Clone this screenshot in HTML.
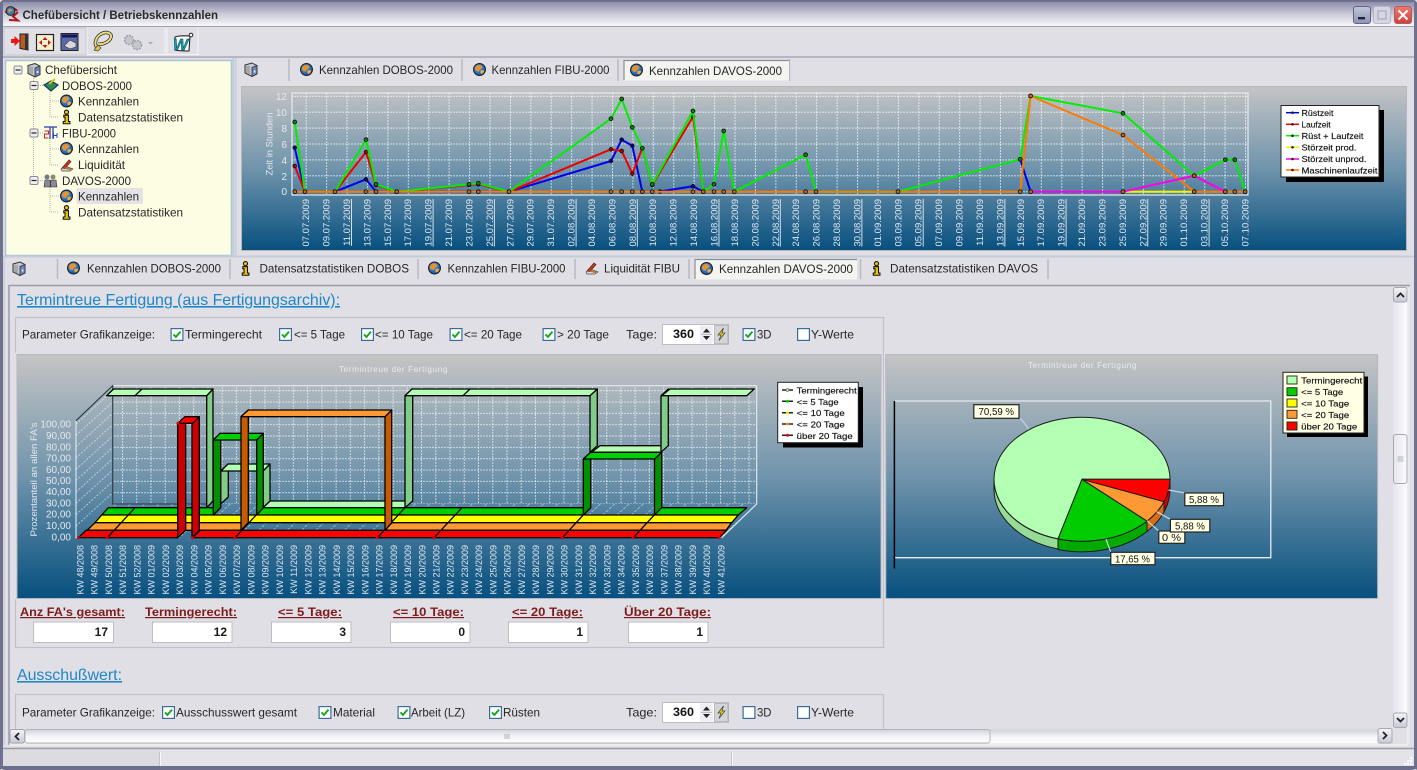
<!DOCTYPE html>
<html lang="de"><head><meta charset="utf-8"><title>Chefübersicht / Betriebskennzahlen</title>
<style>
html,body{margin:0;padding:0;background:#e0dfe5;width:1417px;height:770px;overflow:hidden}
svg{display:block;position:absolute;left:0;top:0;filter:blur(.35px)}
text{font-family:"Liberation Sans",sans-serif;font-size:11.7px;fill:#262626;white-space:pre}
.tt{font-weight:bold;font-size:11.5px;fill:#2a2a2a}
.sec{font-size:16px;fill:#1e87c8;text-decoration:underline}
.st{font-weight:bold;font-size:12px;fill:#7e1c1c;text-decoration:underline}
.v{font-weight:bold;font-size:12px;fill:#1a1a1a;text-anchor:end}
.d text{font-size:9.5px;fill:#dfe6ee;text-anchor:end}
.d text.u{text-decoration:underline}
.k text{font-size:9px;fill:#dfe6ee;text-anchor:end}
.yt text{font-size:10px;fill:#e4e8ec;text-anchor:end}
.wt{font-size:8px;fill:#e8ecef;letter-spacing:.6px}
.lg text{font-size:8.5px;fill:#111;stroke:#111;stroke-width:.15}
.pl{font-size:10px;fill:#111}
.s{stroke:#000;stroke-width:1.3;stroke-linejoin:round}
.l{fill:none;stroke-width:2;stroke-linejoin:round}
.sep{stroke:#b9b9c2;stroke-width:1.5}
</style></head><body>
<svg width="1417" height="770" viewBox="0 0 1417 770" xmlns="http://www.w3.org/2000/svg">
<defs>
<linearGradient id="cg" x1="0" y1="0" x2="0" y2="1"><stop offset="0" stop-color="#c4c4c4"/><stop offset=".5" stop-color="#7094ac"/><stop offset="1" stop-color="#07507f"/></linearGradient>
<linearGradient id="tb" x1="0" y1="0" x2="0" y2="1"><stop offset="0" stop-color="#8d8ea9"/><stop offset=".55" stop-color="#cfcfdc"/><stop offset="1" stop-color="#f7f7fa"/></linearGradient>
<linearGradient id="bt" x1="0" y1="0" x2="0" y2="1"><stop offset="0" stop-color="#f4f4f8"/><stop offset="1" stop-color="#c8c9d6"/></linearGradient>
<linearGradient id="hb" x1="0" y1="0" x2="0" y2="1"><stop offset="0" stop-color="#cfd0da"/><stop offset=".5" stop-color="#f4f4f8"/><stop offset="1" stop-color="#fdfdff"/></linearGradient>
<linearGradient id="vb" x1="0" y1="0" x2="1" y2="0"><stop offset="0" stop-color="#e4e4ec"/><stop offset="1" stop-color="#fbfbff"/></linearGradient>
<linearGradient id="mn" x1="0" y1="0" x2="0" y2="1"><stop offset="0" stop-color="#c3c6dc"/><stop offset="1" stop-color="#8f93b3"/></linearGradient>
<linearGradient id="cl" x1="0" y1="0" x2="0" y2="1"><stop offset="0" stop-color="#ee7b70"/><stop offset="1" stop-color="#cf3f3a"/></linearGradient>
<radialGradient id="gl" cx=".4" cy=".35" r=".7"><stop offset="0" stop-color="#4fa8f5"/><stop offset="1" stop-color="#0f4aa6"/></radialGradient>
<pattern id="pv" patternUnits="userSpaceOnUse" x="305.7" y="0" width="20.42" height="3"><rect x="0" y="0" width="1" height="2" fill="#fff" opacity=".65"/></pattern>
<pattern id="ph" patternUnits="userSpaceOnUse" x="0" y="191.2" width="3" height="15.9"><rect x="0" y="0" width="2" height="1" fill="#fff" opacity=".65"/></pattern>
<pattern id="pv2" patternUnits="userSpaceOnUse" x="122" y="0" width="14.24" height="3"><rect x="0" y="0" width="1" height="2" fill="#fff" opacity=".6"/></pattern>
<pattern id="ph2" patternUnits="userSpaceOnUse" x="0" y="390.2" width="3" height="11.33"><rect x="0" y="0" width="2" height="1" fill="#fff" opacity=".6"/></pattern>
<pattern id="pf" patternUnits="userSpaceOnUse" x="80" y="504" width="14.24" height="3" patternTransform="skewX(-47.4)"><rect x="0" y="0" width="1" height="2" fill="#fff" opacity=".6"/></pattern>
<marker id="mg" markerWidth="6" markerHeight="6" refX="3" refY="3" markerUnits="userSpaceOnUse"><circle cx="3" cy="3" r="1.9" fill="#0c8a0c" stroke="#111" stroke-width=".9"/></marker>
<marker id="mo" markerWidth="6" markerHeight="6" refX="3" refY="3" markerUnits="userSpaceOnUse"><circle cx="3" cy="3" r="1.9" fill="#c86a10" stroke="#111" stroke-width=".9"/></marker>
<marker id="mr" markerWidth="6" markerHeight="6" refX="3" refY="3" markerUnits="userSpaceOnUse"><circle cx="3" cy="3" r="1.8" fill="#b00" stroke="#111" stroke-width=".9"/></marker>
<marker id="mb" markerWidth="6" markerHeight="6" refX="3" refY="3" markerUnits="userSpaceOnUse"><circle cx="3" cy="3" r="1.8" fill="#00a" stroke="#111" stroke-width=".9"/></marker>
<symbol id="globe" viewBox="0 0 14 14" overflow="visible"><circle cx="7" cy="7" r="6.4" fill="url(#gl)" stroke="#1c1c1c" stroke-width="1.1"/><path d="M3 3.6C5 1.500 9.500 1.600 10 4.400 10.300 6.400 7.500 6 7 7.800 6.500 9.500 4.300 9.700 2.900 8 1.900 6.600 1.900 4.800 3 3.600Z" fill="#e8922a"/><path d="M8.400 8.100c1.600-.7 3.600-.6 3.600.5 0 1.800-2 3.300-3.200 2.900-1-.4-1.300-2.700-.4-3.400Z" fill="#eead3a"/></symbol>
<symbol id="info" viewBox="0 0 10 16" overflow="visible"><circle cx="5" cy="2.600" r="2.300" fill="#f0c800" stroke="#111" stroke-width="1.200"/><path d="M2 6h5.200v7h1.600v2.500H1.400V13h2V8.200H2Z" fill="#f0c800" stroke="#111" stroke-width="1.200"/></symbol>
<symbol id="box" viewBox="0 0 14 15" overflow="visible"><path d="M1 3 8 1l5 2.500V12l-5 2.500L1 11Z" fill="#c6c9d2" stroke="#333" stroke-width="1"/><path d="M8 5.500 13 3.500V12l-5 2.500Z" fill="#6f86b8" stroke="#333" stroke-width=".8"/><path d="M3 4v7M5 4v8" stroke="#777" stroke-width=".8"/><path d="M9.800 8.500h1.600v2H9.800Z" fill="#eef"/></symbol>
<symbol id="liq" viewBox="0 0 14 14" overflow="visible"><path d="M1 11 5 8l8 3-3 2H2Z" fill="#d8d8e0" stroke="#444" stroke-width=".7"/><path d="M2 10 9 2l2 1.500-6 7Z" fill="#c83a1a" stroke="#522" stroke-width=".7"/><path d="M5 10l6 1.500" stroke="#c87018" stroke-width="1.600"/></symbol>
<symbol id="cb" viewBox="0 0 13 13" overflow="visible"><rect x=".6" y=".6" width="11.800" height="11.800" fill="#fff" stroke="#3a6d94" stroke-width="1.200"/><path d="M3 6.400 5.400 9 10 3.600" fill="none" stroke="#0fa81a" stroke-width="1.900"/></symbol>
<symbol id="cn" viewBox="0 0 13 13" overflow="visible"><rect x=".6" y=".6" width="11.800" height="11.800" fill="#fff" stroke="#3a6d94" stroke-width="1.200"/></symbol>
<symbol id="ex" viewBox="0 0 9 9" overflow="visible"><rect x=".5" y=".5" width="8" height="8" rx="1.500" fill="#eeeef2" stroke="#8a8a96"/><path d="M2 4.500h5" stroke="#222" stroke-width="1.200"/></symbol>
<symbol id="spin" viewBox="0 0 67 20" overflow="visible"><rect x=".5" y=".5" width="66" height="20" fill="#fff" stroke="#bcbcc4"/><rect x="38" y="1.500" width="13" height="18" fill="#eeeef4"/><path d="M41 8.500l3.500-4 3.500 4ZM41 12l3.500 4 3.500-4Z" fill="#222"/><path d="M39 10.300h11" stroke="#aaa" stroke-width=".8"/><rect x="52.500" y="1.500" width="13.500" height="18" fill="#d4d4d8" stroke="#999" stroke-width=".6"/><path d="M61.500 4 56 11h3l-2 5.500 6-7.500h-3l1.500-5Z" fill="#e9c616" stroke="#444" stroke-width=".7"/></symbol>
</defs>

<!-- window frame -->
<rect x="0" y="0" width="1417" height="770" rx="5" fill="#70728f"/>
<rect x="3" y="2" width="1411" height="765" fill="#e0dfe5"/>
<rect x="3" y="2" width="1411" height="24" fill="url(#tb)"/>
<path d="M0 770V6Q0 0 6 0H1411Q1417 0 1417 6V770" fill="none" stroke="#6c6e8c" stroke-width="1"/>
<path d="M6 13c0-5 8-7 11-2M9 20l9 .5-5-4 5-4.500" fill="none" stroke="#b21818" stroke-width="2"/><circle cx="10.500" cy="11" r="4.400" fill="#3f7fb0" stroke="#222"/><path d="M8 10c2-2 4-1 4 0s-3 2-3 3" fill="#e09a30"/>
<text class="tt" x="22.500" y="19" textLength="195.500" lengthAdjust="spacingAndGlyphs">Chefübersicht / Betriebskennzahlen</text>
<rect x="1353.500" y="6.500" width="17" height="17" rx="2.500" fill="url(#mn)" stroke="#5f6386"/><rect x="1358" y="17" width="7" height="2.400" fill="#1e2040"/>
<rect x="1373.500" y="6.500" width="17" height="17" rx="2.500" fill="#d5d6e2" stroke="#b5b7c8"/><rect x="1378" y="11" width="8" height="8" fill="none" stroke="#aeb0c2" stroke-width="1.400"/>
<rect x="1394.500" y="6.500" width="17" height="17" rx="2.500" fill="url(#cl)" stroke="#a9605f"/><path d="M1398.500 10.500l9 9M1407.500 10.500l-9 9" stroke="#fff" stroke-width="2"/>

<!-- toolbar -->
<path d="M3 26.500H1414" stroke="#a0a0ae"/>
<path d="M3 57H1414" stroke="#a8a8b4" stroke-width="1.500"/>
<path d="M4 55V28H86M86 28V55H4" fill="none" stroke="#c5c5ce"/><path d="M87 28V55M165 28V55M167 28V55M198 28V55" stroke="#f4f4f7"/><path d="M87 54.500H165M167 54.500H198" stroke="#f4f4f7"/>
<path d="M20 34h8v16l-8-1.500Z" fill="#b95a24" stroke="#222"/><path d="M25 34h3.500v16H25" fill="#333"/><path d="M11 39h3.500v-3l5.500 5-5.500 5v-3H11Z" fill="#f01414"/>
<rect x="36.500" y="34.500" width="17" height="16" fill="#f6efd0" stroke="#222" stroke-width="1.200"/><path d="M45 37l2.500 3h-5ZM45 48l2.500-3h-5ZM39 42.500l3-2.500v5ZM51 42.500l-3-2.500v5Z" fill="#c81414"/>
<rect x="61" y="33.500" width="17" height="17" fill="#5a68a8" stroke="#222"/><rect x="62" y="34.500" width="15" height="3" fill="#14145a"/><path d="M64 46l6-6 6 3v4l-6 2Z" fill="#d8d8dc" stroke="#444" stroke-width=".7"/>
<path d="M99 48c-6-1-4-11 2-14 5-3 11-1 10 3-1 5-9 8-13 7" fill="none" stroke="#222" stroke-width="3.400"/><path d="M99 48c-6-1-4-11 2-14 5-3 11-1 10 3-1 5-9 8-13 7" fill="none" stroke="#e9dc82" stroke-width="2"/><path d="M94 50l4-5 3 3-3 3Z" fill="#e0c840" stroke="#444" stroke-width=".7"/>
<circle cx="129" cy="40" r="4.500" fill="#c5c6cc" stroke="#9ea0a8" stroke-width="1.500" stroke-dasharray="2 1"/><circle cx="137" cy="45" r="4.500" fill="#c5c6cc" stroke="#9ea0a8" stroke-width="1.500" stroke-dasharray="2 1"/><path d="M148 42h5l-2.500 2.500Z" fill="#aaa"/>
<path d="M175 37c5-2 13-1 15-1l-1 15c-4 0-10 0-14-1Z" fill="#fff" stroke="#222" stroke-width="1.100"/><text x="173" y="50" style="font-size:16px;font-weight:bold;font-style:italic;fill:#08a6b0;stroke:#123;stroke-width:.4">W</text><circle cx="191" cy="35" r="1.800" fill="#fff" stroke="#222"/>

<!-- tree -->
<rect x="5.500" y="60.500" width="226" height="195" fill="#fdfde4" stroke="#a9c5d6" stroke-width="1.500"/>
<path d="M233.500 58V256" stroke="#bcd0de" stroke-width="2"/><path d="M236 58V256" stroke="#c3c3cc"/>
<g fill="none" stroke="#b4b4a8" stroke-dasharray="1 1"><path d="M33.500 76V181M50 90V117H59M50 101H59M50 138V165H59M50 149H59M50 185V212H59M50 196H59M38 85.500H44M38 133H44M38 180.500H44"/></g>
<use href="#ex" x="13.500" y="65.500" width="9" height="9"/><use href="#ex" x="29.500" y="81" width="9" height="9"/><use href="#ex" x="29.500" y="128.500" width="9" height="9"/><use href="#ex" x="29.500" y="176" width="9" height="9"/>
<use href="#box" x="26.500" y="62.500" width="15" height="15"/>
<text x="45" y="74" textLength="72" lengthAdjust="spacingAndGlyphs">Chefübersicht</text>
<path d="M44 85l7-4 7 4-7 6Z" fill="#2e8a50" stroke="#123a5a" stroke-width="1.200"/><path d="M49 84l6-5" stroke="#d8c020" stroke-width="2"/>
<text x="62" y="90" textLength="70" lengthAdjust="spacingAndGlyphs">DOBOS-2000</text>
<use href="#globe" x="60" y="94.500" width="13" height="13"/><text x="78" y="105.500" textLength="61" lengthAdjust="spacingAndGlyphs">Kennzahlen</text>
<use href="#info" x="62" y="109.500" width="9" height="15"/><text x="78" y="121.500" textLength="105" lengthAdjust="spacingAndGlyphs">Datensatzstatistiken</text>
<path d="M44 127h13M50 127v12M53 127v12" stroke="#2b3fb0" stroke-width="1.300"/><path d="M44.500 131h4v3h-4v4h4" fill="none" stroke="#e01818" stroke-width="1"/><path d="M53.500 133v5M57 133v5M53.500 135.500H57" stroke="#2b3fd0" stroke-width="1"/>
<text x="62" y="137.500" textLength="54" lengthAdjust="spacingAndGlyphs">FIBU-2000</text>
<use href="#globe" x="60" y="142" width="13" height="13"/><text x="78" y="153" textLength="61" lengthAdjust="spacingAndGlyphs">Kennzahlen</text>
<use href="#liq" x="60" y="158" width="14" height="14"/><text x="78" y="169" textLength="47" lengthAdjust="spacingAndGlyphs">Liquidität</text>
<circle cx="47" cy="177" r="2.500" fill="#778"/><circle cx="53" cy="177" r="2.500" fill="#8a8a70"/><path d="M44 187l1-7h5l1 7ZM50 187l1-7h5l1 7Z" fill="#889" stroke="#333" stroke-width=".6"/>
<text x="62" y="185" textLength="69" lengthAdjust="spacingAndGlyphs">DAVOS-2000</text>
<rect x="76.500" y="188" width="66.500" height="16" fill="#e3e3e6"/>
<use href="#globe" x="60" y="189.500" width="13" height="13"/><text x="78" y="200.500" textLength="61" lengthAdjust="spacingAndGlyphs">Kennzahlen</text>
<use href="#info" x="62" y="205" width="9" height="15"/><text x="78" y="216.500" textLength="105" lengthAdjust="spacingAndGlyphs">Datensatzstatistiken</text>

<!-- upper tabs -->
<use href="#box" x="244" y="62" width="14" height="15"/>
<path class="sep" d="M289 59V81M462 59V81M618 59V81M789.500 59V81"/>
<use href="#globe" x="300" y="63" width="13" height="13"/><text x="319" y="74" textLength="134" lengthAdjust="spacingAndGlyphs">Kennzahlen DOBOS-2000</text>
<use href="#globe" x="473" y="63" width="13" height="13"/><text x="491.500" y="74" textLength="118" lengthAdjust="spacingAndGlyphs">Kennzahlen FIBU-2000</text>
<rect x="624" y="60.500" width="165" height="20" fill="#f4f4f1"/><path d="M624 80V60.500H789" fill="none" stroke="#8d8d96" stroke-width="1.200"/>
<use href="#globe" x="630" y="63.500" width="13" height="13"/><text x="649" y="75" textLength="133" lengthAdjust="spacingAndGlyphs">Kennzahlen DAVOS-2000</text>

<!-- top chart -->
<rect x="241.500" y="86.500" width="1165" height="164" fill="url(#cg)" stroke="#b6b6bf"/>
<rect x="292" y="93" width="956" height="102" fill="url(#pv)"/><rect x="292" y="93" width="956" height="102" fill="url(#ph)"/>
<rect x="292" y="93" width="956" height="102" fill="none" stroke="#e8ecf0" stroke-width="1.200"/>
<g class="yt"><text x="287" y="100">12</text><text x="287" y="116">10</text><text x="287" y="132">8</text><text x="287" y="148">6</text><text x="287" y="164">4</text><text x="287" y="180">2</text><text x="287" y="195">0</text></g>
<text transform="translate(272.500,175.500)rotate(-90)" style="font-size:9.500px;fill:#e2e7ec" textLength="63" lengthAdjust="spacingAndGlyphs">Zeit in Stunden</text>
<polyline class="l" stroke="#f5f500" marker-start="url(#mo)" marker-end="url(#mo)" points="1123,191.700 1194.200,191.700"/>
<polyline class="l" stroke="#0000ee" style="marker:url(#mb)" points="294.700,147.700 305,191.700 335,191.700 366,179.300 376,191.700 509,191.700 611,161 621.700,139.700 632.300,145.700 642.300,191.700 652.300,191.700"/>
<polyline class="l" stroke="#0000ee" style="marker:url(#mb)" points="660,191.500 693,186.300 703.300,191.700"/>
<polyline class="l" stroke="#0000ee" style="marker:url(#mb)" points="1020.200,159.300 1030.600,191.700"/>
<polyline class="l" stroke="#ee0000" style="marker:url(#mr)" points="294.700,166 305,191.700 335,191.700 366,152 376,185 396,191.700 469,185 478.300,184.300 509,191.700 611,149.300 621.700,151 632.300,173.700 642.300,148.300 652.300,185 693,116.700 703.300,191.700"/>
<polyline class="l" stroke="#00ee00" style="marker:url(#mg)" points="294.700,122 305,191.700 335,191.700 366,139.700 376,184.300 396.700,191.700 469,184.300 478.300,183.300 509,191.700 611,118.700 621.700,99 632.300,127.300 642.300,148.300 652.300,184.300 693,111 703.300,191.700 714,184.300 723.700,131 734.300,191.700 805.600,154.700 816,191.700 898,191.700 1020.200,159.300 1030.600,96 1123,113.300 1194.200,175.700 1225.300,159.700 1234.800,159.700 1245.200,191.700"/>
<polyline class="l" stroke="#ff7a00" style="marker:url(#mo)" points="294.700,191.700 305,191.700 335,191.700 366,191.700 376,191.700 396.700,191.700 469,191.700 478.300,191.700 509,191.700 611,191.700 621.700,191.700 632.300,191.700 642.300,191.700 652.300,191.700 693,191.700 703.300,191.700 714,191.700 723.700,191.700 734.300,191.700 805.600,191.700 816,191.700 898,191.700 1020.200,191.700 1030.600,96 1123,135 1194.200,191.700 1225.300,191.700 1234.800,191.700 1245.200,191.700"/>
<polyline class="l" stroke="#ff00e6" style="marker:url(#mo)" points="1030.600,191.700 1123,191.700 1194.200,175.700 1225.300,191.700"/>
<g class="d">
<text transform="translate(309,199)rotate(-90)">07.07.2009</text><text transform="translate(329.500,199)rotate(-90)">09.07.2009</text><text class="u" transform="translate(350,199)rotate(-90)">11.07.2009</text><text transform="translate(370.400,199)rotate(-90)">13.07.2009</text><text transform="translate(390.800,199)rotate(-90)">15.07.2009</text><text transform="translate(411.200,199)rotate(-90)">17.07.2009</text><text class="u" transform="translate(431.600,199)rotate(-90)">19.07.2009</text><text transform="translate(452,199)rotate(-90)">21.07.2009</text><text transform="translate(472.500,199)rotate(-90)">23.07.2009</text><text class="u" transform="translate(492.900,199)rotate(-90)">25.07.2009</text><text transform="translate(513.300,199)rotate(-90)">27.07.2009</text><text transform="translate(533.700,199)rotate(-90)">29.07.2009</text><text transform="translate(554.100,199)rotate(-90)">31.07.2009</text><text class="u" transform="translate(574.600,199)rotate(-90)">02.08.2009</text><text transform="translate(595,199)rotate(-90)">04.08.2009</text><text transform="translate(615.400,199)rotate(-90)">06.08.2009</text><text class="u" transform="translate(635.800,199)rotate(-90)">08.08.2009</text><text transform="translate(656.200,199)rotate(-90)">10.08.2009</text><text transform="translate(676.700,199)rotate(-90)">12.08.2009</text><text transform="translate(697.100,199)rotate(-90)">14.08.2009</text><text class="u" transform="translate(717.500,199)rotate(-90)">16.08.2009</text><text transform="translate(737.900,199)rotate(-90)">18.08.2009</text><text transform="translate(758.300,199)rotate(-90)">20.08.2009</text><text class="u" transform="translate(778.800,199)rotate(-90)">22.08.2009</text><text transform="translate(799.200,199)rotate(-90)">24.08.2009</text><text transform="translate(819.600,199)rotate(-90)">26.08.2009</text><text transform="translate(840,199)rotate(-90)">28.08.2009</text><text class="u" transform="translate(860.400,199)rotate(-90)">30.08.2009</text><text transform="translate(880.900,199)rotate(-90)">01.09.2009</text><text transform="translate(901.300,199)rotate(-90)">03.09.2009</text><text class="u" transform="translate(921.700,199)rotate(-90)">05.09.2009</text><text transform="translate(942.100,199)rotate(-90)">07.09.2009</text><text transform="translate(962.500,199)rotate(-90)">09.09.2009</text><text transform="translate(983,199)rotate(-90)">11.09.2009</text><text class="u" transform="translate(1003.400,199)rotate(-90)">13.09.2009</text><text transform="translate(1023.800,199)rotate(-90)">15.09.2009</text><text transform="translate(1044.200,199)rotate(-90)">17.09.2009</text><text class="u" transform="translate(1064.600,199)rotate(-90)">19.09.2009</text><text transform="translate(1085.100,199)rotate(-90)">21.09.2009</text><text transform="translate(1105.500,199)rotate(-90)">23.09.2009</text><text transform="translate(1125.900,199)rotate(-90)">25.09.2009</text><text class="u" transform="translate(1146.300,199)rotate(-90)">27.09.2009</text><text transform="translate(1166.700,199)rotate(-90)">29.09.2009</text><text transform="translate(1187.200,199)rotate(-90)">01.10.2009</text><text class="u" transform="translate(1207.600,199)rotate(-90)">03.10.2009</text><text transform="translate(1228,199)rotate(-90)">05.10.2009</text><text transform="translate(1248.400,199)rotate(-90)">07.10.2009</text>
</g>
<rect x="1286" y="110" width="98" height="72" fill="#000"/>
<rect x="1281" y="105.500" width="98" height="71.500" fill="#fff" stroke="#222"/>
<g stroke-width="1.500"><path d="M1286 112.700h13" stroke="#00e"/><path d="M1286 124.300h13" stroke="#e00"/><path d="M1286 135.700h13" stroke="#0e0"/><path d="M1286 147.300h13" stroke="#ee0"/><path d="M1286 159h13" stroke="#f0d"/><path d="M1286 170h13" stroke="#f70"/></g>
<g fill="#222"><circle cx="1292.500" cy="112.700" r="1.300"/><circle cx="1292.500" cy="124.300" r="1.300"/><circle cx="1292.500" cy="135.700" r="1.300"/><circle cx="1292.500" cy="147.300" r="1.300"/><circle cx="1292.500" cy="159" r="1.300"/><circle cx="1292.500" cy="170" r="1.300"/></g>
<g class="lg"><text x="1301.500" y="116" textLength="32" lengthAdjust="spacingAndGlyphs">Rüstzeit</text><text x="1301.500" y="127.500" textLength="29" lengthAdjust="spacingAndGlyphs">Laufzeit</text><text x="1301.500" y="139" textLength="62" lengthAdjust="spacingAndGlyphs">Rüst + Laufzeit</text><text x="1301.500" y="150.500" textLength="55" lengthAdjust="spacingAndGlyphs">Störzeit prod.</text><text x="1301.500" y="162" textLength="65" lengthAdjust="spacingAndGlyphs">Störzeit unprod.</text><text x="1301.500" y="173.500" textLength="76" lengthAdjust="spacingAndGlyphs">Maschinenlaufzeit</text></g>

<!-- lower tabs -->
<path d="M3 256.500H1414" stroke="#c5cdd6" stroke-width="2"/>
<use href="#box" x="12" y="261" width="14" height="15"/>
<path class="sep" d="M57.500 259V279M230 259V279M418 259V279M575 259V279M689 259V279M860.500 259V279M1048 259V279"/>
<use href="#globe" x="67" y="261.500" width="13" height="13"/><text x="87" y="272.500" textLength="134" lengthAdjust="spacingAndGlyphs">Kennzahlen DOBOS-2000</text>
<use href="#info" x="241" y="261" width="9" height="15"/><text x="259.500" y="272.500" textLength="149.500" lengthAdjust="spacingAndGlyphs">Datensatzstatistiken DOBOS</text>
<use href="#globe" x="428" y="261.500" width="13" height="13"/><text x="447.500" y="272.500" textLength="118" lengthAdjust="spacingAndGlyphs">Kennzahlen FIBU-2000</text>
<use href="#liq" x="585" y="261" width="14" height="14"/><text x="604" y="272.500" textLength="76" lengthAdjust="spacingAndGlyphs">Liquidität FIBU</text>
<rect x="695" y="259.500" width="162" height="20" fill="#f4f4f1"/><path d="M695 279V259.500H857" fill="none" stroke="#8d8d96" stroke-width="1.200"/>
<use href="#globe" x="700" y="262" width="13" height="13"/><text x="719" y="273" textLength="134" lengthAdjust="spacingAndGlyphs">Kennzahlen DAVOS-2000</text>
<use href="#info" x="872" y="261" width="9" height="15"/><text x="890" y="272.500" textLength="148" lengthAdjust="spacingAndGlyphs">Datensatzstatistiken DAVOS</text>
<path d="M9 285.500H1410" stroke="#9c9ca6" stroke-width="1.500"/>
<path d="M9 285V745" stroke="#9c9ca6" stroke-width="1.500"/><path d="M4 258V745" stroke="#bfc0cc"/>

<!-- content -->
<text class="sec" x="17" y="305" textLength="323" lengthAdjust="spacingAndGlyphs">Termintreue Fertigung (aus Fertigungsarchiv):</text>
<path d="M15.500 353V317.500H883.500V647.500H15.500V599" fill="none" stroke="#c1c1c9" stroke-width="1.200"/>
<text x="22" y="338.500" textLength="133" lengthAdjust="spacingAndGlyphs">Parameter Grafikanzeige:</text>
<use href="#cb" x="170.500" y="328" width="13" height="13"/><text x="185" y="338.500" textLength="77" lengthAdjust="spacingAndGlyphs">Termingerecht</text>
<use href="#cb" x="279" y="328" width="13" height="13"/><text x="294" y="338.500" textLength="51" lengthAdjust="spacingAndGlyphs">&lt;= 5 Tage</text>
<use href="#cb" x="361" y="328" width="13" height="13"/><text x="375" y="338.500" textLength="58" lengthAdjust="spacingAndGlyphs">&lt;= 10 Tage</text>
<use href="#cb" x="449.500" y="328" width="13" height="13"/><text x="464" y="338.500" textLength="58" lengthAdjust="spacingAndGlyphs">&lt;= 20 Tage</text>
<use href="#cb" x="542.500" y="328" width="13" height="13"/><text x="557" y="338.500" textLength="52" lengthAdjust="spacingAndGlyphs">&gt; 20 Tage</text>
<text x="626" y="338.500" textLength="31" lengthAdjust="spacingAndGlyphs">Tage:</text>
<use href="#spin" x="662" y="324" width="67" height="20"/><text x="673" y="338" style="font-weight:bold;font-size:12px;fill:#111" textLength="21" lengthAdjust="spacingAndGlyphs">360</text>
<use href="#cb" x="742.500" y="328" width="13" height="13"/><text x="757" y="338.500" textLength="14.500" lengthAdjust="spacingAndGlyphs">3D</text>
<use href="#cn" x="797" y="328" width="13" height="13"/><text x="811" y="338.500" textLength="43" lengthAdjust="spacingAndGlyphs">Y-Werte</text>

<!-- 3D chart -->
<rect x="17" y="354.500" width="864" height="244" fill="url(#cg)" stroke="#b6b6bf"/>
<text class="wt" x="339" y="372" textLength="109" lengthAdjust="spacingAndGlyphs">Termintreue der Fertigung</text>
<rect x="112.700" y="385.700" width="644" height="118.300" fill="url(#pv2)"/><rect x="112.700" y="385.700" width="644" height="118.300" fill="url(#ph2)"/>
<polygon points="76,537.700 112.700,504 756.700,504 721.700,537.700" fill="url(#pf)"/>
<g stroke="#fff" stroke-width=".8" stroke-dasharray="2 1.500" opacity=".65"><path d="M76 424 112.700 390.700M76 435.300 112.700 402M76 446.700 112.700 413.300M76 458 112.700 424.700M76 469.300 112.700 436M76 480.600 112.700 447.300M76 492 112.700 458.700M76 503.300 112.700 470M76 514.700 112.700 481.300M76 526 112.700 492.700"/></g>
<path d="M756.700 385.700V504L721.700 537.700M756.700 385.700H112.700M76 420.700V537.700H100" fill="none" stroke="#e6ebef" stroke-width="1.100"/>
<path d="M76 420.700 112.700 385.700V504H210" fill="none" stroke="#2c3a44" stroke-width="1.100"/>
<g class="yt"><text x="71" y="427.500">100,00</text><text x="71" y="439">90,00</text><text x="71" y="450.300">80,00</text><text x="71" y="461.700">70,00</text><text x="71" y="473">60,00</text><text x="71" y="484">50,00</text><text x="71" y="495">40,00</text><text x="71" y="506.300">30,00</text><text x="71" y="517.500">20,00</text><text x="71" y="529">10,00</text><text x="71" y="540.500">0,00</text></g>
<text transform="translate(37,536.500)rotate(-90)" style="font-size:9.500px;fill:#e2e7ec" textLength="114" lengthAdjust="spacingAndGlyphs">Prozentanteil an allen FA's</text>

<g class="s" fill="#b3ffb3">
<polygon points="263,507.700 270,501 412,501 405,507.700"/>
<polygon fill="#80cc88" points="220.700,471 228.300,464 228.300,497 220.700,504"/>
<polygon fill="#80cc88" points="263,471 270,464 270,501 263,507.700"/>
<polygon points="221,471 228,464 270,464 263,471"/>
<polygon fill="#80cc88" points="206.700,395.700 213,389 213,501 206.700,507.700"/>
<polygon points="106.700,395.700 113.500,389 213,389 206.700,395.700"/><path d="M135 395.700 142 389"/>
<polygon fill="#80cc88" points="405,395.700 412.700,389 412.700,501 405,507.700"/>
<polygon fill="#80cc88" points="590,395.700 597.300,389 597.300,445.700 590,452.300"/>
<polygon points="405,395.700 412,389 597.300,389 590,395.700"/><path d="M463 395.700 470 389"/>
<polygon points="591.700,452.300 600,445.700 661.700,445.700 661.700,452.300"/>
<polygon fill="#80cc88" points="661,395.700 668.300,389 668.300,445.700 661,452.300"/>
<polygon points="661.700,395.700 670,389 754.300,389 746.700,395.700"/>
</g>
<g class="s" fill="#00d000">
<polygon points="101.700,515 108.300,507.700 220,507.700 213.300,515"/>
<polygon points="256.700,515 263.300,507.700 590.700,507.700 583.300,515"/>
<polygon points="654,515 661,507.700 746.700,507.700 738.300,515"/>
</g>
<polygon class="s" fill="#ffff00" points="95,522.700 101.700,515 738.300,515 731.700,522.700"/>
<g class="s" fill="#ff9933">
<polygon points="87,530.300 95,522.700 248.300,522.700 241,530.300"/>
<polygon points="385,530.300 392,522.700 731.700,522.700 726,530.300"/>
</g>
<g class="s" fill="#ff0000">
<polygon points="78.300,537.700 86,530.300 185,530.300 177.700,537.700"/>
<polygon points="192.700,537.700 200,530.300 726.700,530.300 719.300,537.700"/>
</g>
<path class="s" fill="none" d="M107.300 537.700 135 507.700M434 537.700 462 507.700M562.300 537.700 590 507.700M633.300 537.700 661 507.700M377.300 537.700 405 507.700M235 537.700 263 507.700"/>
<g class="s" fill="#009000">
<polygon points="213.300,440 220.700,433.300 220.700,507.700 213.300,515"/>
<polygon points="256.700,440 263.300,433.300 263.300,507.700 256.700,515"/>
<polygon fill="#00d000" points="213.300,440 220,433.300 263.300,433.300 256.700,440"/>
<polygon points="583.300,459 590.700,452.300 590.700,507.700 583.300,515"/>
<polygon points="654.500,459 661.700,452.300 661.700,507.700 654.500,515"/>
<polygon fill="#00d000" points="583.300,459 590.700,452.300 661.700,452.300 654.500,459"/>
</g>
<g class="s" fill="#c85a00">
<polygon points="241,416.700 248.300,410 248.300,522.700 241,530.300"/>
<polygon points="385,416.700 391.700,410 391.700,522.700 385,530.300"/>
<polygon fill="#ff9933" points="241,416.700 248.300,410 391.700,410 385,416.700"/>
</g>
<g class="s" fill="#cc0000">
<polygon points="177.700,423.300 185.700,416.700 185.700,530.300 177.700,537.700"/>
<polygon points="192,423.300 199.300,416.700 199.300,530.300 192,537.700"/>
<polygon fill="#ff0000" points="177.700,423.300 185,416.700 199.300,416.700 192.700,423.300"/>
</g>
<g fill="#e00000"><circle cx="78.300" cy="537.700" r="1.500"/><circle cx="107.300" cy="537.700" r="1.500"/><circle cx="178" cy="423.300" r="1.500"/><circle cx="192.700" cy="537.700" r="1.500"/><circle cx="235" cy="537.700" r="1.500"/><circle cx="377.300" cy="537.700" r="1.500"/><circle cx="434" cy="537.700" r="1.500"/><circle cx="562.300" cy="537.700" r="1.500"/><circle cx="633.300" cy="537.700" r="1.500"/><circle cx="719" cy="537.700" r="1.500"/></g>
<g class="k">
<text transform="translate(83.500,545)rotate(-90)">KW 48/2008</text><text transform="translate(97.700,545)rotate(-90)">KW 49/2008</text><text transform="translate(112,545)rotate(-90)">KW 50/2008</text><text transform="translate(126.200,545)rotate(-90)">KW 51/2008</text><text transform="translate(140.500,545)rotate(-90)">KW 52/2008</text><text transform="translate(154.700,545)rotate(-90)">KW 01/2009</text><text transform="translate(168.900,545)rotate(-90)">KW 02/2009</text><text transform="translate(183.200,545)rotate(-90)">KW 03/2009</text><text transform="translate(197.400,545)rotate(-90)">KW 04/2009</text><text transform="translate(211.700,545)rotate(-90)">KW 05/2009</text><text transform="translate(225.900,545)rotate(-90)">KW 06/2009</text><text transform="translate(240.100,545)rotate(-90)">KW 07/2009</text><text transform="translate(254.400,545)rotate(-90)">KW 08/2009</text><text transform="translate(268.600,545)rotate(-90)">KW 09/2009</text><text transform="translate(282.900,545)rotate(-90)">KW 10/2009</text><text transform="translate(297.100,545)rotate(-90)">KW 11/2009</text><text transform="translate(311.300,545)rotate(-90)">KW 12/2009</text><text transform="translate(325.600,545)rotate(-90)">KW 13/2009</text><text transform="translate(339.800,545)rotate(-90)">KW 14/2009</text><text transform="translate(354.100,545)rotate(-90)">KW 15/2009</text><text transform="translate(368.300,545)rotate(-90)">KW 16/2009</text><text transform="translate(382.500,545)rotate(-90)">KW 17/2009</text><text transform="translate(396.800,545)rotate(-90)">KW 18/2009</text><text transform="translate(411,545)rotate(-90)">KW 19/2009</text><text transform="translate(425.300,545)rotate(-90)">KW 20/2009</text><text transform="translate(439.500,545)rotate(-90)">KW 21/2009</text><text transform="translate(453.700,545)rotate(-90)">KW 22/2009</text><text transform="translate(468,545)rotate(-90)">KW 23/2009</text><text transform="translate(482.200,545)rotate(-90)">KW 24/2009</text><text transform="translate(496.500,545)rotate(-90)">KW 25/2009</text><text transform="translate(510.700,545)rotate(-90)">KW 26/2009</text><text transform="translate(524.900,545)rotate(-90)">KW 27/2009</text><text transform="translate(539.200,545)rotate(-90)">KW 28/2009</text><text transform="translate(553.400,545)rotate(-90)">KW 29/2009</text><text transform="translate(567.700,545)rotate(-90)">KW 30/2009</text><text transform="translate(581.900,545)rotate(-90)">KW 31/2009</text><text transform="translate(596.100,545)rotate(-90)">KW 32/2009</text><text transform="translate(610.400,545)rotate(-90)">KW 33/2009</text><text transform="translate(624.600,545)rotate(-90)">KW 34/2009</text><text transform="translate(638.900,545)rotate(-90)">KW 35/2009</text><text transform="translate(653.100,545)rotate(-90)">KW 36/2009</text><text transform="translate(667.300,545)rotate(-90)">KW 37/2009</text><text transform="translate(681.600,545)rotate(-90)">KW 38/2009</text><text transform="translate(695.800,545)rotate(-90)">KW 39/2009</text><text transform="translate(710.100,545)rotate(-90)">KW 40/2009</text><text transform="translate(724.300,545)rotate(-90)">KW 41/2009</text>
</g>
<rect x="783" y="387" width="80" height="60.500" fill="#000"/><rect x="777.700" y="382.300" width="80.600" height="60.400" fill="#fff" stroke="#222"/>
<path d="M782 390h11M782 401.300h11M782 412.700h11M782 424h11M782 435.300h11" stroke="#222" stroke-width="1.500"/>
<circle cx="787.500" cy="390" r="1.500" fill="#b3ffb3" stroke="#222" stroke-width=".5"/><circle cx="787.500" cy="401.300" r="1.500" fill="#00d000"/><circle cx="787.500" cy="412.700" r="1.500" fill="#e8e800"/><circle cx="787.500" cy="424" r="1.500" fill="#f09030"/><circle cx="787.500" cy="435.300" r="1.500" fill="#f00000"/>
<g class="lg"><text x="796.700" y="393.500" textLength="60" lengthAdjust="spacingAndGlyphs">Termingerecht</text><text x="796.700" y="404.800" textLength="42" lengthAdjust="spacingAndGlyphs">&lt;= 5 Tage</text><text x="796.700" y="416.200" textLength="48" lengthAdjust="spacingAndGlyphs">&lt;= 10 Tage</text><text x="796.700" y="427.500" textLength="48" lengthAdjust="spacingAndGlyphs">&lt;= 20 Tage</text><text x="796.700" y="438.800" textLength="56" lengthAdjust="spacingAndGlyphs">über 20 Tage</text></g>

<!-- pie chart -->
<rect x="885.800" y="354.500" width="491.800" height="244" fill="url(#cg)" stroke="#b6b6bf"/>
<text class="wt" x="1028" y="368" textLength="109" lengthAdjust="spacingAndGlyphs">Termintreue der Fertigung</text>
<path d="M895 401H1270.800V557.700H895" fill="none" stroke="#e6ebef" stroke-width="1.300"/>
<path d="M894.400 401V568.500" stroke="#000" stroke-width="1.500"/>
<g stroke="#1a1a1a" stroke-width="1" stroke-linejoin="round">
<path d="M994 479.300A88 62 0 0 0 1058 538.900V549A88 62 0 0 1 994 490Z" fill="#96dc96"/>
<path d="M1058 538.900A88 62 0 0 0 1147 521.100V531.500A88 62 0 0 1 1058 549.500Z" fill="#00aa00"/>
<path d="M1147 521.100A88 62 0 0 0 1164 501.700V512A88 62 0 0 1 1147 531.500Z" fill="#d96e18"/>
<path d="M1164 501.700A88 62 0 0 0 1170 479.300V490A88 62 0 0 1 1164 512Z" fill="#d00000"/>
<path d="M1082 479.300 1058 538.900A88 62 0 1 1 1170 479.300Z" fill="#b3ffb3"/>
<path d="M1082 479.300 1147 521.100A88 62 0 0 1 1058 538.900Z" fill="#00cc00"/>
<path d="M1082 479.300 1164 501.700A88 62 0 0 1 1147 521.100Z" fill="#ff9933"/>
<path d="M1082 479.300H1170A88 62 0 0 1 1164 501.700Z" fill="#ff0000"/>
</g>
<g stroke="#c8d4dc" stroke-width="1.200"><path d="M1020.400 418.300 1029 429.300M1168.400 490 1184.800 493M1156.700 511.700 1170.400 519.300M1147 520.700 1158.800 531M1106 539 1110.800 552.300"/></g>
<g fill="#ffffe4" stroke="#222" stroke-width="1.200">
<rect x="973.800" y="404.700" width="45.200" height="13.600"/><rect x="1184.800" y="493" width="38.700" height="12.700"/><rect x="1158.800" y="531" width="26" height="12.300"/><rect x="1170.400" y="519.300" width="39.400" height="12.700"/><rect x="1110.800" y="552.300" width="44.200" height="12.400"/>
</g>
<text class="pl" x="978.500" y="415" textLength="35.500" lengthAdjust="spacingAndGlyphs">70,59 %</text><text class="pl" x="1189" y="503" textLength="30" lengthAdjust="spacingAndGlyphs">5,88 %</text><text class="pl" x="1162" y="541" textLength="19" lengthAdjust="spacingAndGlyphs">0 %</text><text class="pl" x="1175" y="529.500" textLength="30" lengthAdjust="spacingAndGlyphs">5,88 %</text><text class="pl" x="1115" y="562.500" textLength="35" lengthAdjust="spacingAndGlyphs">17,65 %</text>
<rect x="1287" y="376.500" width="81" height="60.500" fill="#000"/><rect x="1283" y="372.300" width="81" height="60.700" fill="#ffffe4" stroke="#222"/>
<g stroke="#222" stroke-width=".9"><rect x="1287" y="376" width="10" height="8" fill="#b3ffb3"/><rect x="1287" y="387.700" width="10" height="8" fill="#00cc00"/><rect x="1287" y="399" width="10" height="8" fill="#ffff00"/><rect x="1287" y="410.300" width="10" height="8" fill="#ff9933"/><rect x="1287" y="422" width="10" height="8" fill="#ff0000"/></g>
<g class="lg"><text x="1301.200" y="383.500" textLength="61" lengthAdjust="spacingAndGlyphs">Termingerecht</text><text x="1301.200" y="395" textLength="42" lengthAdjust="spacingAndGlyphs">&lt;= 5 Tage</text><text x="1301.200" y="406.500" textLength="48" lengthAdjust="spacingAndGlyphs">&lt;= 10 Tage</text><text x="1301.200" y="417.800" textLength="48" lengthAdjust="spacingAndGlyphs">&lt;= 20 Tage</text><text x="1301.200" y="429.500" textLength="56" lengthAdjust="spacingAndGlyphs">über 20 Tage</text></g>

<!-- stats -->
<text class="st" x="20" y="616" textLength="105" lengthAdjust="spacingAndGlyphs">Anz FA's gesamt:</text>
<text class="st" x="145" y="616" textLength="92" lengthAdjust="spacingAndGlyphs">Termingerecht:</text>
<text class="st" x="278" y="616" textLength="64" lengthAdjust="spacingAndGlyphs">&lt;= 5 Tage:</text>
<text class="st" x="393" y="616" textLength="71" lengthAdjust="spacingAndGlyphs">&lt;= 10 Tage:</text>
<text class="st" x="512" y="616" textLength="71" lengthAdjust="spacingAndGlyphs">&lt;= 20 Tage:</text>
<text class="st" x="624" y="616" textLength="87" lengthAdjust="spacingAndGlyphs">Über 20 Tage:</text>
<g fill="#fff" stroke="#bcbcc4"><rect x="33.500" y="622" width="80" height="20.500"/><rect x="152.500" y="622" width="79.500" height="20.500"/><rect x="271.500" y="622" width="79.500" height="20.500"/><rect x="390.500" y="622" width="79.500" height="20.500"/><rect x="508.500" y="622" width="79.500" height="20.500"/><rect x="628.500" y="622" width="79.500" height="20.500"/></g>
<text class="v" x="108" y="636">17</text><text class="v" x="227" y="636">12</text><text class="v" x="346" y="636">3</text><text class="v" x="465" y="636">0</text><text class="v" x="583" y="636">1</text><text class="v" x="703" y="636">1</text>

<text class="sec" x="17" y="680" textLength="105" lengthAdjust="spacingAndGlyphs">Ausschußwert:</text>
<path d="M15.500 730V694.500H883.500V730" fill="none" stroke="#c1c1c9" stroke-width="1.200"/>
<text x="22" y="716.500" textLength="133" lengthAdjust="spacingAndGlyphs">Parameter Grafikanzeige:</text>
<use href="#cb" x="162" y="706" width="13" height="13"/><text x="176" y="716.500" textLength="121" lengthAdjust="spacingAndGlyphs">Ausschusswert gesamt</text>
<use href="#cb" x="318.500" y="706" width="13" height="13"/><text x="333" y="716.500" textLength="42" lengthAdjust="spacingAndGlyphs">Material</text>
<use href="#cb" x="397.500" y="706" width="13" height="13"/><text x="411" y="716.500" textLength="54" lengthAdjust="spacingAndGlyphs">Arbeit (LZ)</text>
<use href="#cb" x="489" y="706" width="13" height="13"/><text x="503" y="716.500" textLength="37" lengthAdjust="spacingAndGlyphs">Rüsten</text>
<text x="626" y="716.500" textLength="31" lengthAdjust="spacingAndGlyphs">Tage:</text>
<use href="#spin" x="662" y="702" width="67" height="20"/><text x="673" y="716" style="font-weight:bold;font-size:12px;fill:#111" textLength="21" lengthAdjust="spacingAndGlyphs">360</text>
<use href="#cn" x="742.500" y="706" width="13" height="13"/><text x="757" y="716.500" textLength="14.500" lengthAdjust="spacingAndGlyphs">3D</text>
<use href="#cn" x="797" y="706" width="13" height="13"/><text x="811" y="716.500" textLength="43" lengthAdjust="spacingAndGlyphs">Y-Werte</text>

<!-- scrollbars -->
<rect x="1393" y="287" width="14" height="441" fill="url(#vb)"/>
<rect x="1393.500" y="287.500" width="13.500" height="14.500" rx="2" fill="url(#bt)" stroke="#a8a8b4"/><path d="M1397 297l3.500-3.500 3.500 3.500" fill="none" stroke="#222" stroke-width="1.800"/>
<rect x="1393.500" y="434.500" width="13.500" height="49" rx="2.500" fill="url(#vb)" stroke="#a8a8b4"/><path d="M1397.500 457h6M1397.500 459h6M1397.500 461h6" stroke="#b0b0bc"/>
<rect x="1393.500" y="713" width="13.500" height="14.500" rx="2" fill="url(#bt)" stroke="#a8a8b4"/><path d="M1397 718l3.500 3.500 3.500-3.500" fill="none" stroke="#222" stroke-width="1.800"/>
<rect x="10" y="729.500" width="1368" height="14" fill="url(#hb)"/>
<rect x="10" y="729.500" width="14.500" height="13.500" rx="2" fill="url(#bt)" stroke="#a8a8b4"/><path d="M19 733l-3.500 3.500 3.500 3.500" fill="none" stroke="#222" stroke-width="1.800"/>
<rect x="25" y="729.500" width="965" height="13.500" rx="2.500" fill="url(#hb)" stroke="#b4b4c0"/><path d="M505 734v5M507 734v5M509 734v5" stroke="#b0b0bc"/>
<rect x="1378" y="728.500" width="14" height="14.500" rx="2" fill="url(#bt)" stroke="#a8a8b4"/><path d="M1383 732l3.500 3.500-3.500 3.500" fill="none" stroke="#222" stroke-width="1.800"/>
<path d="M9 745H1408" stroke="#f8f8f2"/><path d="M3 748.500H1414" stroke="#9c9ca8" stroke-width="1.500"/><path d="M1408 288V745" stroke="#f8f8f2"/>

<!-- status bar -->
<rect x="3" y="750" width="1411" height="17" fill="#e4e4e8"/><rect x="3" y="750" width="157" height="17" fill="#dcdce0"/>
<path d="M160.500 752V766M732.500 752V766" stroke="#f8f8fa"/><path d="M159.500 752V766M731.500 752V766" stroke="#c4c4cc"/>
<g fill="#fff"><rect x="1410" y="757" width="2" height="2"/><rect x="1407" y="760" width="2" height="2"/><rect x="1410" y="760" width="2" height="2"/><rect x="1404" y="763" width="2" height="2"/><rect x="1407" y="763" width="2" height="2"/><rect x="1410" y="763" width="2" height="2"/></g>
<path d="M0 767.500H1417" stroke="#6c6e8c" stroke-width="3"/>
</svg>
</body></html>
